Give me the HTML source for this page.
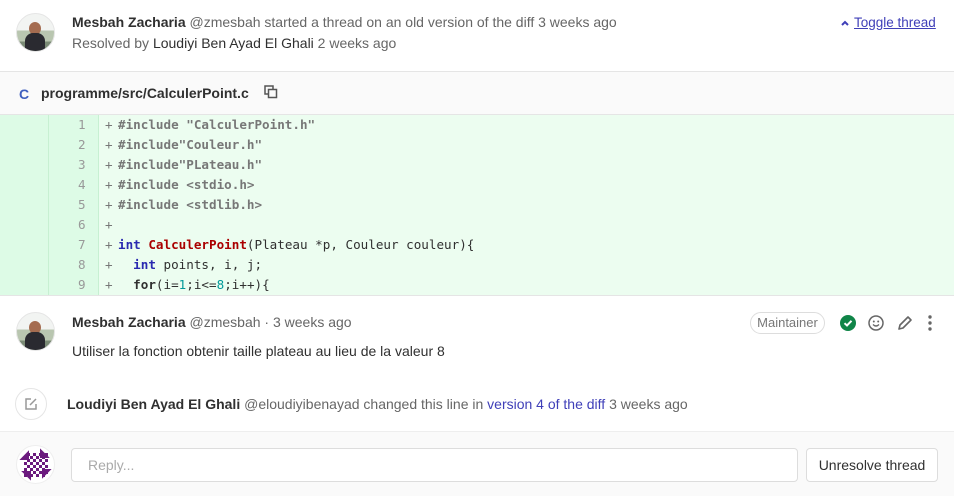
<!DOCTYPE html>
<html><head><meta charset="utf-8"><style>
*{box-sizing:border-box;margin:0;padding:0}
body{width:954px;height:496px;overflow:hidden;background:#fff;font-family:"Liberation Sans","DejaVu Sans",sans-serif;font-size:14px;color:#303030;position:relative}
.abs{position:absolute}
.av{border-radius:50%;border:1px solid #e5e5e5;overflow:hidden}
.b{font-weight:bold;color:#303030}
.g{color:#666}
.code{font-family:"DejaVu Sans Mono",monospace;font-size:12.6px;color:#303030}
.line{position:absolute;left:0;width:954px;height:20px;line-height:20px}
</style></head><body>
<div class="abs av" style="left:16px;top:13px;width:39px;height:39px;background:linear-gradient(#f2f4f2 0 45%,#b9c6b0 45% 75%,#7a8a75 75%)">
<div class="abs" style="left:12px;top:8px;width:12px;height:13px;border-radius:50%;background:#a46c50"></div>
<div class="abs" style="left:8px;top:19px;width:20px;height:22px;border-radius:8px 8px 0 0;background:#2a2a30"></div>
</div>
<div class="abs" style="left:72px;top:14px;white-space:nowrap"><span class="b">Mesbah Zacharia</span> <span class="g">@zmesbah started a thread on an old version of the diff 3 weeks ago</span></div>
<div class="abs g" style="left:72px;top:35px;white-space:nowrap">Resolved by <span style="color:#303030">Loudiyi Ben Ayad El Ghali</span> 2 weeks ago</div>
<div class="abs" style="left:840px;top:15px;color:#3f3fb8;font-size:13.5px;white-space:nowrap"><svg width="10" height="8" viewBox="0 0 10 8" style="margin-right:4px"><path d="M2 6 L5 3 L8 6" stroke="#3f3fb8" stroke-width="2" fill="none"/></svg><span style="text-decoration:underline">Toggle thread</span></div>
<div class="abs" style="left:0;top:71px;width:954px;height:44px;background:#fafafa;border-top:1px solid #e5e5e5;border-bottom:1px solid #e5e5e5"></div>
<div class="abs" style="left:19px;top:86px;color:#3f5fbf;font-weight:bold;font-size:14px">C</div>
<div class="abs b" style="left:41px;top:85px">programme/src/CalculerPoint.c</div>
<svg class="abs" style="left:264px;top:85px" width="14" height="14" viewBox="0 0 14 14"><rect x="1" y="1" width="8" height="8" fill="none" stroke="#555" stroke-width="1.5"/><rect x="4.5" y="4.5" width="8" height="8" fill="#fafafa" stroke="#555" stroke-width="1.5"/></svg>
<div class="abs" style="left:0;top:115px;width:954px;height:180px;background:#ecfdf0"></div>
<div class="abs" style="left:0;top:115px;width:98px;height:180px;background:#ddfbe6"></div>
<div class="abs" style="left:48px;top:115px;width:1px;height:180px;background:#c7f0d2"></div>
<div class="abs" style="left:98px;top:115px;width:1px;height:180px;background:#c7f0d2"></div>
<div class="abs" style="left:0;top:295px;width:954px;height:1px;background:#e5e5e5"></div>
<div class="code">
<div class="line" style="top:115px"><span class="abs" style="left:78px;color:#999">1</span><span class="abs" style="left:105px;color:#777">+</span><span class="abs" style="left:118px;color:#777;font-weight:bold;white-space:pre">#include "CalculerPoint.h"</span></div>
<div class="line" style="top:135px"><span class="abs" style="left:78px;color:#999">2</span><span class="abs" style="left:105px;color:#777">+</span><span class="abs" style="left:118px;color:#777;font-weight:bold;white-space:pre">#include"Couleur.h"</span></div>
<div class="line" style="top:155px"><span class="abs" style="left:78px;color:#999">3</span><span class="abs" style="left:105px;color:#777">+</span><span class="abs" style="left:118px;color:#777;font-weight:bold;white-space:pre">#include"PLateau.h"</span></div>
<div class="line" style="top:175px"><span class="abs" style="left:78px;color:#999">4</span><span class="abs" style="left:105px;color:#777">+</span><span class="abs" style="left:118px;color:#777;font-weight:bold;white-space:pre">#include &lt;stdio.h&gt;</span></div>
<div class="line" style="top:195px"><span class="abs" style="left:78px;color:#999">5</span><span class="abs" style="left:105px;color:#777">+</span><span class="abs" style="left:118px;color:#777;font-weight:bold;white-space:pre">#include &lt;stdlib.h&gt;</span></div>
<div class="line" style="top:215px"><span class="abs" style="left:78px;color:#999">6</span><span class="abs" style="left:105px;color:#777">+</span></div>
<div class="line" style="top:235px"><span class="abs" style="left:78px;color:#999">7</span><span class="abs" style="left:105px;color:#777">+</span><span class="abs" style="left:118px;white-space:pre"><b style="color:#2a2ab0">int</b> <b style="color:#a00">CalculerPoint</b>(Plateau *p, Couleur couleur){</span></div>
<div class="line" style="top:255px"><span class="abs" style="left:78px;color:#999">8</span><span class="abs" style="left:105px;color:#777">+</span><span class="abs" style="left:118px;white-space:pre">  <b style="color:#2a2ab0">int</b> points, i, j;</span></div>
<div class="line" style="top:275px"><span class="abs" style="left:78px;color:#999">9</span><span class="abs" style="left:105px;color:#777">+</span><span class="abs" style="left:118px;white-space:pre">  <b>for</b>(i=<span style="color:#099">1</span>;i&lt;=<span style="color:#099">8</span>;i++){</span></div>
</div>
<div class="abs av" style="left:16px;top:312px;width:39px;height:39px;background:linear-gradient(#f2f4f2 0 45%,#b9c6b0 45% 75%,#7a8a75 75%)">
<div class="abs" style="left:12px;top:8px;width:12px;height:13px;border-radius:50%;background:#a46c50"></div>
<div class="abs" style="left:8px;top:19px;width:20px;height:22px;border-radius:8px 8px 0 0;background:#2a2a30"></div>
</div>
<div class="abs" style="left:72px;top:314px;white-space:nowrap"><span class="b">Mesbah Zacharia</span> <span class="g">@zmesbah · 3 weeks ago</span></div>
<div class="abs" style="left:72px;top:343px;white-space:nowrap">Utiliser la fonction obtenir taille plateau au lieu de la valeur 8</div>
<div class="abs" style="left:750px;top:312px;width:75px;height:22px;border:1px solid #ddd;border-radius:11px;font-size:13px;color:#777;text-align:center;line-height:20px">Maintainer</div>
<svg class="abs" style="left:839px;top:314px" width="18" height="18" viewBox="0 0 18 18"><circle cx="9" cy="9" r="8" fill="#108548"/><path d="M5.5 9.2 L8 11.5 L12.5 6.8" stroke="#fff" stroke-width="2" fill="none"/></svg>
<svg class="abs" style="left:867px;top:314px" width="18" height="18" viewBox="0 0 18 18"><circle cx="9" cy="9" r="7" fill="none" stroke="#666" stroke-width="1.5"/><circle cx="6.8" cy="7.5" r="1" fill="#666"/><circle cx="11.2" cy="7.5" r="1" fill="#666"/><path d="M6 10.5 Q9 13.5 12 10.5" stroke="#666" stroke-width="1.3" fill="none"/></svg>
<svg class="abs" style="left:896px;top:314px" width="18" height="18" viewBox="0 0 18 18"><path d="M3 15 L4 11 L12 3 L15 6 L7 14 Z" fill="none" stroke="#666" stroke-width="1.6" stroke-linejoin="round"/></svg>
<svg class="abs" style="left:926px;top:314px" width="8" height="18" viewBox="0 0 8 18"><circle cx="4" cy="3" r="1.7" fill="#666"/><circle cx="4" cy="9" r="1.7" fill="#666"/><circle cx="4" cy="15" r="1.7" fill="#666"/></svg>
<div class="abs" style="left:15px;top:388px;width:32px;height:32px;border:1px solid #e5e5e5;border-radius:50%"></div>
<svg class="abs" style="left:24px;top:397px" width="14" height="14" viewBox="0 0 14 14"><path d="M7 2 H2 V12 H12 V7" fill="none" stroke="#999" stroke-width="1.5"/><path d="M6 8 L12 2" stroke="#999" stroke-width="1.5"/></svg>
<div class="abs" style="left:67px;top:396px;white-space:nowrap"><span class="b">Loudiyi Ben Ayad El Ghali</span> <span class="g">@eloudiyibenayad changed this line in <span style="color:#3f3fb8">version 4 of the diff</span> 3 weeks ago</span></div>
<div class="abs" style="left:0;top:431px;width:954px;height:65px;background:#fafafa;border-top:1px solid #eee"></div>
<div class="abs" style="left:16px;top:445px;width:39px;height:39px;border-radius:50%;background:#fff;border:1px solid #eee;overflow:hidden">
<div class="abs" style="left:7px;top:7px;width:24px;height:24px;background:repeating-conic-gradient(#6b1a7e 0 25%,#fff 0 50%) 0 0/6px 6px"></div>
<div class="abs" style="left:0;top:0;width:12px;height:14px;background:#6b1a7e;clip-path:polygon(100% 30%,100% 100%,20% 100%)"></div>
<div class="abs" style="right:0;bottom:0;width:12px;height:14px;background:#6b1a7e;clip-path:polygon(0 0,80% 0,0 70%)"></div>
<div class="abs" style="right:0;top:0;width:14px;height:12px;background:#6b1a7e;clip-path:polygon(0 100%,0 20%,70% 100%)"></div>
<div class="abs" style="left:0;bottom:0;width:14px;height:12px;background:#6b1a7e;clip-path:polygon(100% 0,100% 80%,30% 0)"></div>
</div>
<div class="abs" style="left:71px;top:448px;width:727px;height:34px;background:#fff;border:1px solid #ddd;border-radius:4px;color:#aaa;padding-left:16px;line-height:32px">Reply...</div>
<div class="abs" style="left:806px;top:448px;width:132px;height:34px;background:#fff;border:1px solid #ddd;border-radius:4px;color:#303030;text-align:center;line-height:32px">Unresolve thread</div>
</body></html>
